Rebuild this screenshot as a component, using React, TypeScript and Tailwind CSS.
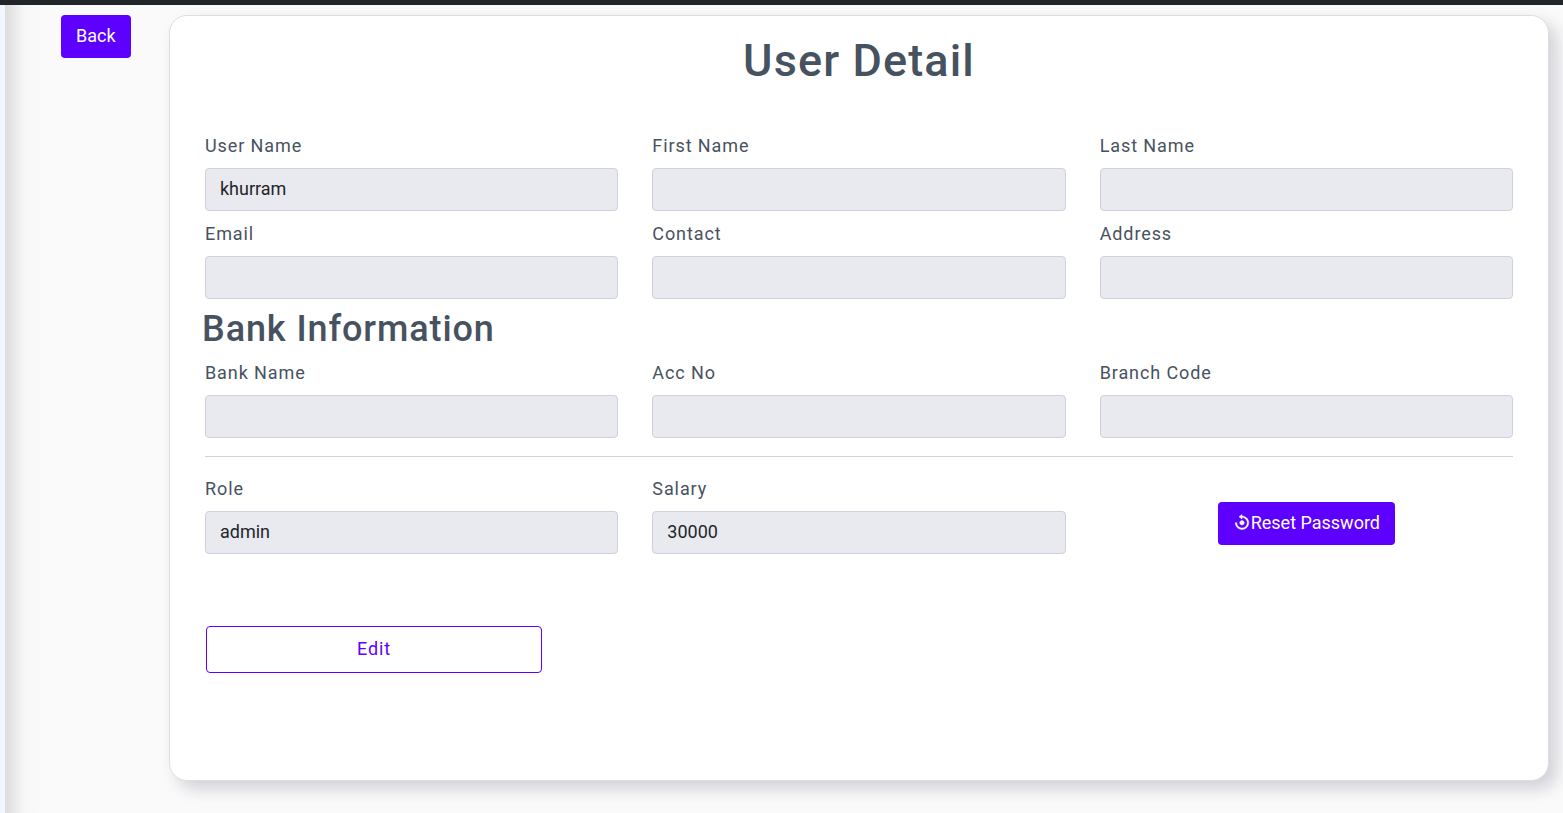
import { useId } from "react";
import { BiReset } from "react-icons/bi";

type FieldProps = { label: string; value?: string };

function Field({ label, value = "" }: FieldProps) {
  const id = useId();
  return (
    <div>
      <label htmlFor={id} className="mb-2.5 block leading-[25px]">
        {label}
      </label>
      <input
        id={id}
        type="text"
        readOnly
        value={value}
        className="block h-[43px] w-full rounded border border-[#cfd1df] bg-[#e9eaf0] px-3.5 pb-0.5 tracking-normal text-[#212529] outline-none"
      />
    </div>
  );
}

export default function App() {
  return (
    <div className="flex min-h-screen flex-col bg-[#fafafa] font-['Roboto',sans-serif] text-[18px] leading-[27px] text-[#475260]">
      <header className="h-[5px] bg-[#212529]" />
      <div className="flex flex-1">
        <div className="w-[5px] bg-[#f0f7ff]" />
        <div className="w-10 bg-linear-to-r from-[#dcdcdc] via-[#f8f8f8] to-[#fafafa]" />
        <main className="flex flex-1 items-stretch pt-2.5 pr-3.5 pb-8 pl-4">
          <div className="w-[108px]">
            <button
              type="button"
              className="h-[43px] rounded bg-[#5d00ff] px-[15px] pb-0.5 text-white"
            >
              Back
            </button>
          </div>
          <section className="flex-1 rounded-[18px] border border-[#dedede] bg-white px-[35px] tracking-wider shadow-[8px_8px_16px_#d1d1d9]">
            <h1 className="mt-[18px] mb-[45px] text-center text-[45px] leading-[54px] font-medium tracking-wide">
              User Detail
            </h1>
            <form>
              <div className="grid grid-cols-3 gap-x-[34px] gap-y-2.5">
                <Field label="User Name" value="khurram" />
                <Field label="First Name" />
                <Field label="Last Name" />
                <Field label="Email" />
                <Field label="Contact" />
                <Field label="Address" />
              </div>
              <h2 className="-mx-[3px] mt-[9px] mb-[9px] text-[36px] leading-[43px] font-medium tracking-wide">
                Bank Information
              </h2>
              <div className="grid grid-cols-3 gap-x-[34px]">
                <Field label="Bank Name" />
                <Field label="Acc No" />
                <Field label="Branch Code" />
              </div>
              <hr className="mt-[18px] mb-[19px] border-[#d1d4d7]" />
              <div className="grid grid-cols-3 gap-x-[34px]">
                <Field label="Role" value="admin" />
                <Field label="Salary" value="30000" />
                <div className="flex items-center justify-center pt-4">
                  <button
                    type="button"
                    className="flex h-[43px] items-center rounded bg-[#5d00ff] px-[15px] pb-0.5 tracking-normal text-white"
                  >
                    <BiReset className="size-[18px] stroke-current stroke-[0.6]" aria-hidden="true" />
                    Reset Password
                  </button>
                </div>
              </div>
              <button
                type="button"
                className="mt-[72px] ml-px h-[47px] w-[336px] rounded border border-[#5d00ff] bg-white pb-0.5 tracking-wider text-[#5d00ff]"
              >
                Edit
              </button>
            </form>
          </section>
        </main>
      </div>
    </div>
  );
}
